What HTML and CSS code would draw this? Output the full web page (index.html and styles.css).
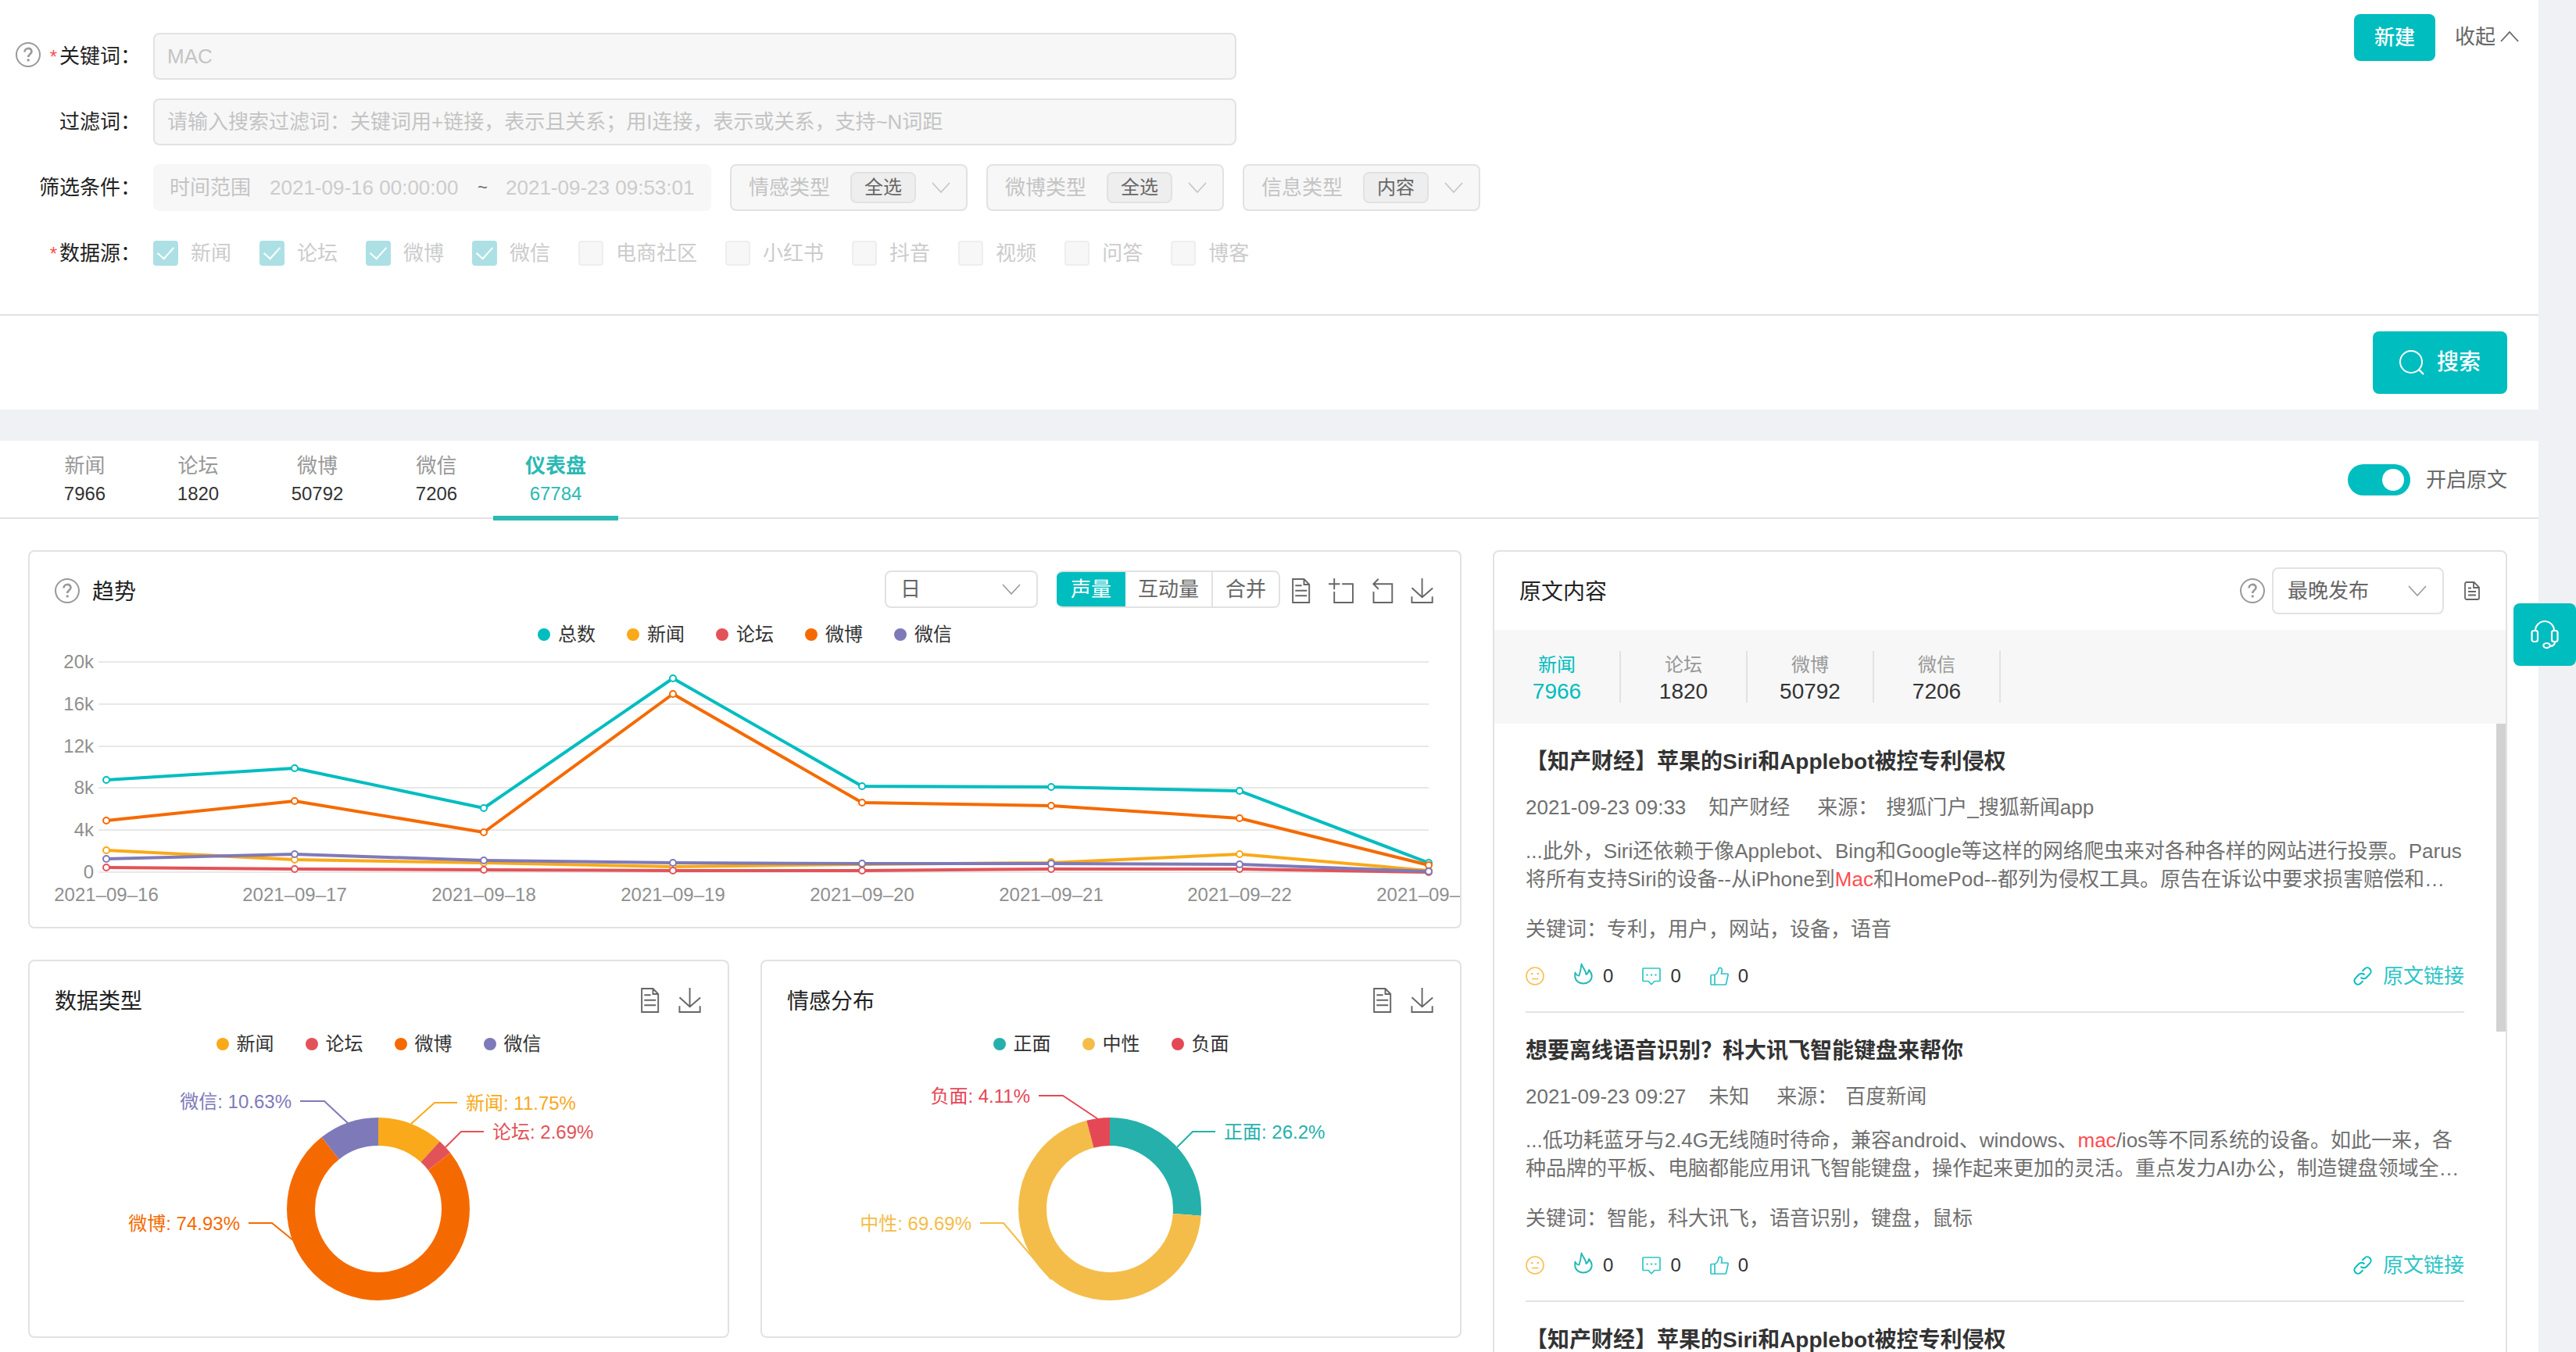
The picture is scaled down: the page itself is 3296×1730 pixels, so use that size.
FILE: index.html
```html
<!DOCTYPE html>
<html lang="zh-CN">
<head>
<meta charset="utf-8">
<meta name="viewport" content="width=device-width, initial-scale=1">
<title>舆情监测</title>
<link rel="stylesheet" href="styles.css">
</head>
<body>
<svg class="sprite" aria-hidden="true">
  <symbol id="i-help" viewBox="0 0 32 32"><circle cx="16" cy="16" r="15" stroke-width="2"/><path d="M11.5 12.5c0-6 9-6 9-.6 0 3.2-4.3 3.6-4.3 7" stroke-width="2.6"/><path d="M16.2 21.4v3" stroke-width="3"/></symbol>
  <symbol id="i-down" viewBox="0 0 24 14"><path d="M1 1l11 12L23 1" stroke-width="1.600"/></symbol>
  <symbol id="i-up" viewBox="0 0 24 14"><path d="M1 13L12 1l11 12" stroke-width="1.800"/></symbol>
  <symbol id="i-data" viewBox="0 0 60 60"><path d="M17.5 17.3H33M45.4 29.5h-28M11.5 2v56H51V14.8L38.4 2H11.5zM38.4 2.2v12.7H51M45.4 41.7h-28" stroke-width="3.6"/></symbol>
  <symbol id="i-zoom" viewBox="0 0 60 60"><path d="M0 13.5h26.9M13.5 26.9V0M32.1 13.5H58V58H13.5V32.1" stroke-width="3.6"/></symbol>
  <symbol id="i-back" viewBox="0 0 60 60"><path d="M22 1.4L9.9 13.5l12.3 12.3M10.3 13.5h44.6v44.6H10.3v-26" stroke-width="3.6"/></symbol>
  <symbol id="i-save" viewBox="0 0 60 60"><path d="M4.7 22.9l24.6 22.6 25.4-22.1M4.6 43.6V58h49.2V43.6M29.2 45.1V0" stroke-width="3.6"/></symbol>
  <symbol id="i-file" viewBox="0 0 20 24"><path d="M3 1h9.500l6.500 6.500V21a2 2 0 0 1-2 2H3a2 2 0 0 1-2-2V3a2 2 0 0 1 2-2zM12 1v7h7M5 8.500h4M5 13h10M5 17.500h10" stroke-width="1.800"/></symbol>
  <symbol id="i-face" viewBox="0 0 24 24"><circle cx="12" cy="12" r="11" stroke-width="1.600"/><path d="M7 9h2.500M14.500 9H17" stroke-width="2.200"/><path d="M8 15.500h8.500" stroke-width="1.600"/></symbol>
  <symbol id="i-fire" viewBox="-1 0 26 28"><path d="M1.500 12.500c1 2.500 2.500 4 5 4C8 12 9 6.500 9.500 1.500 11 6.500 15 9 15.500 15c1.800-1 3-3 3.500-6 2.300 2.500 3.700 5 3.700 8 0 5.500-4.500 9.500-10.700 9.500S1.200 22.500 1.200 17c0-1.500 0-3 .3-4.500z" stroke-width="1.900" stroke-linejoin="round"/></symbol>
  <symbol id="i-chat" viewBox="0 0 24 24"><path d="M2 2h20a1 1 0 0 1 1 1v14.500a1 1 0 0 1-1 1h-6L12 22.500l-4-4H2a1 1 0 0 1-1-1V3a1 1 0 0 1 1-1z" stroke-width="1.700"/><path d="M5.500 10.500h2.200M10.900 10.500h2.200M16.300 10.500h2.200" stroke-width="2.200"/></symbol>
  <symbol id="i-like" viewBox="0 0 24 24"><path d="M6 10.500c3-1.500 4.500-3.500 5-8 .3-1.700 4-1.700 4.300 1 .1 1.500-.3 3.500-.8 5.500H22c1 0 1.300.8 1.100 1.500l-2.400 11c-.2 1-.9 1.500-1.900 1.500H2a1 1 0 0 1-1-1V11.500a1 1 0 0 1 1-1h4zM6 10.500V23" stroke-width="1.700"/></symbol>
  <symbol id="i-link" viewBox="0 0 24 24"><path d="M9.500 13.600a5 5 0 0 0 7.200.4l4.500-4.600a4.700 4.700 0 0 0-6.600-6.700l-3.200 3.200M14.500 10.400a5 5 0 0 0-7.200-.4l-4.500 4.600a4.700 4.700 0 0 0 6.600 6.700l3.200-3.200" stroke-width="2"/></symbol>
  <symbol id="i-search" viewBox="0 0 32 32"><circle cx="15" cy="15" r="14" stroke-width="2"/><path d="M25 25l6 6" stroke-width="2.400"/></symbol>
  <symbol id="i-headset" viewBox="0 0 36 36"><path d="M6 13a12 12 0 0 1 24 0M31 27c0 4-3 6-7 6" stroke-width="2.200"/><rect x="1.500" y="13" width="7.500" height="14" rx="2.500" stroke-width="2.200"/><rect x="27" y="13" width="7.500" height="14" rx="2.500" stroke-width="2.200"/><ellipse cx="20.500" cy="32" rx="4.200" ry="3" stroke-width="2.200"/></symbol>
</svg>

<div class="shell">
  <section class="panel">
    <div class="query">
      <form class="form">
        <div class="row">
          <label class="row-label" for="kw"><svg class="ic-32 muted"><use href="#i-help"/></svg><span><i class="req">*</i>关键词：</span></label>
          <input class="field" id="kw" type="text" value="MAC" disabled>
        </div>
        <div class="row">
          <label class="row-label" for="flt"><span>过滤词：</span></label>
          <input class="field" id="flt" type="text" placeholder="请输入搜索过滤词：关键词用+链接，表示且关系；用I连接，表示或关系，支持~N词距" disabled>
        </div>
        <div class="row">
          <span class="row-label">筛选条件：</span>
          <div class="filters">
            <div class="range">
              <label for="from">时间范围</label>
              <input id="from" type="text" value="2021-09-16 00:00:00" disabled>
              <span class="tilde">~</span>
              <input aria-label="结束时间" type="text" value="2021-09-23 09:53:01" disabled>
            </div>
            <label class="pick">情感类型<select disabled><option>全选</option></select><svg class="chev"><use href="#i-down"/></svg></label>
            <label class="pick">微博类型<select disabled><option>全选</option></select><svg class="chev"><use href="#i-down"/></svg></label>
            <label class="pick">信息类型<select disabled><option>内容</option></select><svg class="chev"><use href="#i-down"/></svg></label>
          </div>
        </div>
        <div class="row">
          <span class="row-label"><span><i class="req">*</i>数据源：</span></span>
          <div class="sources">
            <label><input type="checkbox" checked disabled>新闻</label>
            <label><input type="checkbox" checked disabled>论坛</label>
            <label><input type="checkbox" checked disabled>微博</label>
            <label><input type="checkbox" checked disabled>微信</label>
            <label><input type="checkbox" disabled>电商社区</label>
            <label><input type="checkbox" disabled>小红书</label>
            <label><input type="checkbox" disabled>抖音</label>
            <label><input type="checkbox" disabled>视频</label>
            <label><input type="checkbox" disabled>问答</label>
            <label><input type="checkbox" disabled>博客</label>
          </div>
        </div>
      </form>
      <div class="query-actions">
        <button class="btn" type="button">新建</button>
        <button class="fold" type="button">收起<svg class="chev"><use href="#i-up"/></svg></button>
      </div>
    </div>
    <div class="submit">
      <button class="btn btn-search" type="button"><svg class="ic-32"><use href="#i-search"/></svg>搜索</button>
    </div>
  </section>

  <section class="panel results">
    <div class="tabbar">
      <nav class="tabs">
        <button class="tab" type="button"><span>新闻</span><b>7966</b></button>
        <button class="tab" type="button"><span>论坛</span><b>1820</b></button>
        <button class="tab tab-wide" type="button"><span>微博</span><b>50792</b></button>
        <button class="tab" type="button"><span>微信</span><b>7206</b></button>
        <button class="tab tab-wide active" type="button"><span>仪表盘</span><b>67784</b></button>
      </nav>
      <label class="toggle"><input type="checkbox" role="switch" checked>开启原文</label>
    </div>

    <div class="board">
      <div class="charts">
        <article class="card trend">
          <header class="card-head">
            <svg class="ic-32 muted"><use href="#i-help"/></svg>
            <h2>趋势</h2>
            <div class="tools">
              <label class="select day"><select aria-label="时间粒度"><option>日</option></select><svg class="chev"><use href="#i-down"/></svg></label>
              <div class="segments">
                <button type="button" class="on">声量</button><button type="button">互动量</button><button type="button">合并</button>
              </div>
              <div class="toolbox">
                <svg class="ic-32"><use href="#i-data"/></svg>
                <svg class="ic-32"><use href="#i-zoom"/></svg>
                <svg class="ic-32"><use href="#i-back"/></svg>
                <svg class="ic-32"><use href="#i-save"/></svg>
              </div>
            </div>
          </header>
          <ul class="legend">
            <li class="c-total">总数</li><li class="c-news">新闻</li><li class="c-forum">论坛</li><li class="c-weibo">微博</li><li class="c-wechat">微信</li>
          </ul>
          <svg class="chart" viewBox="38 826 1830 360">
            <path class="grid" d="M126 847H1828M126 901H1828M126 955H1828M126 1008H1828M126 1062H1828M126 1116H1828"/>
            <g class="axis axis-y">
              <text x="120" y="855">20k</text><text x="120" y="909">16k</text><text x="120" y="963">12k</text><text x="120" y="1016">8k</text><text x="120" y="1070">4k</text><text x="120" y="1124">0</text>
            </g>
            <g class="axis axis-x">
              <text x="136" y="1153">2021–09–16</text><text x="377" y="1153">2021–09–17</text><text x="619" y="1153">2021–09–18</text><text x="861" y="1153">2021–09–19</text><text x="1103" y="1153">2021–09–20</text><text x="1345" y="1153">2021–09–21</text><text x="1586" y="1153">2021–09–22</text><text x="1828" y="1153">2021–09–23</text>
            </g>
            <g class="line c-total"><polyline points="136,998 377,983 619,1034 861,868 1103,1006 1345,1007 1586,1012 1828,1104"/><circle cx="136" cy="998" r="4"/><circle cx="377" cy="983" r="4"/><circle cx="619" cy="1034" r="4"/><circle cx="861" cy="868" r="4"/><circle cx="1103" cy="1006" r="4"/><circle cx="1345" cy="1007" r="4"/><circle cx="1586" cy="1012" r="4"/><circle cx="1828" cy="1104" r="4"/></g>
            <g class="line c-news"><polyline points="136,1088 377,1100 619,1104 861,1109 1103,1106 1345,1104 1586,1093 1828,1114"/><circle cx="136" cy="1088" r="4"/><circle cx="377" cy="1100" r="4"/><circle cx="619" cy="1104" r="4"/><circle cx="861" cy="1109" r="4"/><circle cx="1103" cy="1106" r="4"/><circle cx="1345" cy="1103" r="4"/><circle cx="1586" cy="1093" r="4"/><circle cx="1828" cy="1114" r="4"/></g>
            <g class="line c-forum"><polyline points="136,1110 377,1112 619,1113 861,1114 1103,1114 1345,1112 1586,1112 1828,1116"/><circle cx="136" cy="1110" r="4"/><circle cx="377" cy="1112" r="4"/><circle cx="619" cy="1113" r="4"/><circle cx="861" cy="1114" r="4"/><circle cx="1103" cy="1114" r="4"/><circle cx="1345" cy="1112" r="4"/><circle cx="1586" cy="1112" r="4"/><circle cx="1828" cy="1116" r="4"/></g>
            <g class="line c-weibo"><polyline points="136,1050 377,1025 619,1065 861,888 1103,1027 1345,1031 1586,1047 1828,1107"/><circle cx="136" cy="1050" r="4"/><circle cx="377" cy="1025" r="4"/><circle cx="619" cy="1065" r="4"/><circle cx="861" cy="888" r="4"/><circle cx="1103" cy="1027" r="4"/><circle cx="1345" cy="1031" r="4"/><circle cx="1586" cy="1047" r="4"/><circle cx="1828" cy="1107" r="4"/></g>
            <g class="line c-wechat"><polyline points="136,1099 377,1093 619,1101 861,1104 1103,1105 1345,1105 1586,1106 1828,1115"/><circle cx="136" cy="1099" r="4"/><circle cx="377" cy="1093" r="4"/><circle cx="619" cy="1101" r="4"/><circle cx="861" cy="1104" r="4"/><circle cx="1103" cy="1105" r="4"/><circle cx="1345" cy="1105" r="4"/><circle cx="1586" cy="1106" r="4"/><circle cx="1828" cy="1115" r="4"/></g>
          </svg>
        </article>

        <article class="card">
          <header class="card-head">
            <h2>数据类型</h2>
            <div class="tools"><div class="toolbox"><svg class="ic-32"><use href="#i-data"/></svg><svg class="ic-32"><use href="#i-save"/></svg></div></div>
          </header>
          <ul class="legend">
            <li class="c-news">新闻</li><li class="c-forum">论坛</li><li class="c-weibo">微博</li><li class="c-wechat">微信</li>
          </ul>
          <svg class="chart" viewBox="38 1349 893 360">
            <g class="ring" transform="rotate(-90 484 1546)">
              <circle class="c-news" cx="484" cy="1546" r="99" pathLength="10000" stroke-dasharray="1175 8825"/>
              <circle class="c-forum" cx="484" cy="1546" r="99" pathLength="10000" stroke-dasharray="269 9731" stroke-dashoffset="-1175"/>
              <circle class="c-weibo" cx="484" cy="1546" r="99" pathLength="10000" stroke-dasharray="7493 2507" stroke-dashoffset="-1444"/>
              <circle class="c-wechat" cx="484" cy="1546" r="99" pathLength="10000" stroke-dasharray="1063 8937" stroke-dashoffset="-8937"/>
            </g>
            <g class="c-news note"><path d="M526 1437l30-27h29"/><text x="596" y="1419">新闻: 11.75%</text></g>
            <g class="c-forum note"><path d="M570 1467l20-20h29"/><text x="630" y="1456">论坛: 2.69%</text></g>
            <g class="c-weibo note end"><path d="M318 1564h30l27 22"/><text x="307" y="1573">微博: 74.93%</text></g>
            <g class="c-wechat note end"><path d="M384 1408h31l31 29"/><text x="373" y="1417">微信: 10.63%</text></g>
          </svg>
        </article>

        <article class="card">
          <header class="card-head">
            <h2>情感分布</h2>
            <div class="tools"><div class="toolbox"><svg class="ic-32"><use href="#i-data"/></svg><svg class="ic-32"><use href="#i-save"/></svg></div></div>
          </header>
          <ul class="legend">
            <li class="c-pos">正面</li><li class="c-neu">中性</li><li class="c-neg">负面</li>
          </ul>
          <svg class="chart" viewBox="975 1349 893 360">
            <g class="ring" transform="rotate(-90 1420 1546)">
              <circle class="c-pos" cx="1420" cy="1546" r="99" pathLength="10000" stroke-dasharray="2620 7380"/>
              <circle class="c-neu" cx="1420" cy="1546" r="99" pathLength="10000" stroke-dasharray="6969 3031" stroke-dashoffset="-2620"/>
              <circle class="c-neg" cx="1420" cy="1546" r="99" pathLength="10000" stroke-dasharray="411 9589" stroke-dashoffset="-9589"/>
            </g>
            <g class="c-pos note"><path d="M1506 1467l20-20h29"/><text x="1566" y="1456">正面: 26.2%</text></g>
            <g class="c-neu note end"><path d="M1254 1564h30l61 72"/><text x="1243" y="1573">中性: 69.69%</text></g>
            <g class="c-neg note end"><path d="M1329 1401h31l45 30"/><text x="1318" y="1410">负面: 4.11%</text></g>
          </svg>
        </article>
      </div>

      <aside class="card origin">
        <header class="origin-head">
          <h2>原文内容</h2>
          <div class="tools">
            <svg class="ic-32 muted"><use href="#i-help"/></svg>
            <label class="select order"><select aria-label="排序"><option>最晚发布</option></select><svg class="chev"><use href="#i-down"/></svg></label>
            <svg class="ic-file"><use href="#i-file"/></svg>
          </div>
        </header>
        <nav class="kinds">
          <button type="button" class="on"><span>新闻</span><b>7966</b></button>
          <button type="button"><span>论坛</span><b>1820</b></button>
          <button type="button"><span>微博</span><b>50792</b></button>
          <button type="button"><span>微信</span><b>7206</b></button>
        </nav>
        <div class="list">
          <div class="thumb"></div>
          <section class="item">
            <h3>【知产财经】苹果的Siri和Applebot被控专利侵权</h3>
            <p class="meta"><span>2021-09-23 09:33</span><span>知产财经</span><span class="from">来源：</span><span>搜狐门户_搜狐新闻app</span></p>
            <p class="text">...此外，Siri还依赖于像Applebot、Bing和Google等这样的网络爬虫来对各种各样的网站进行投票。Parus将所有支持Siri的设备--从iPhone到<em>Mac</em>和HomePod--都列为侵权工具。原告在诉讼中要求损害赔偿和…</p>
            <p class="words">关键词：专利，用户，网站，设备，语音</p>
            <div class="stats">
              <svg class="ic-24 face"><use href="#i-face"/></svg>
              <span><svg class="ic-fire"><use href="#i-fire"/></svg>0</span>
              <span><svg class="ic-24"><use href="#i-chat"/></svg>0</span>
              <span><svg class="ic-24"><use href="#i-like"/></svg>0</span>
              <a href="#"><svg class="ic-24"><use href="#i-link"/></svg>原文链接</a>
            </div>
          </section>
          <section class="item">
            <h3>想要离线语音识别？科大讯飞智能键盘来帮你</h3>
            <p class="meta"><span>2021-09-23 09:27</span><span>未知</span><span class="from">来源：</span><span>百度新闻</span></p>
            <p class="text">...低功耗蓝牙与2.4G无线随时待命，兼容android、windows、<em>mac</em>/ios等不同系统的设备。如此一来，各种品牌的平板、电脑都能应用讯飞智能键盘，操作起来更加的灵活。重点发力AI办公，制造键盘领域全…</p>
            <p class="words">关键词：智能，科大讯飞，语音识别，键盘，鼠标</p>
            <div class="stats">
              <svg class="ic-24 face"><use href="#i-face"/></svg>
              <span><svg class="ic-fire"><use href="#i-fire"/></svg>0</span>
              <span><svg class="ic-24"><use href="#i-chat"/></svg>0</span>
              <span><svg class="ic-24"><use href="#i-like"/></svg>0</span>
              <a href="#"><svg class="ic-24"><use href="#i-link"/></svg>原文链接</a>
            </div>
          </section>
          <section class="item">
            <h3>【知产财经】苹果的Siri和Applebot被控专利侵权</h3>
          </section>
        </div>
      </aside>
    </div>
  </section>
  <button class="service" type="button" aria-label="在线客服"><svg><use href="#i-headset"/></svg></button>
</div>
</body>
</html>
```
FILE: styles.css
```css
:root {
  --brand: #00bdbf;
  --line: #e2e2e2;
  --soft: #f7f7f7;
  --text: #333;
  --sub: #666;
  --off: #c4c4c4;
}

* { box-sizing: border-box; margin: 0; padding: 0; }

body {
  font: 26px/36px "Liberation Sans", "Noto Sans CJK SC", sans-serif;
  color: var(--text);
  background: #f0f1f4;
}

button, input, select { font: inherit; color: inherit; border: 0; background: none; outline: 0; }
button { cursor: pointer; }
select { appearance: none; opacity: 1; }
svg { flex: none; fill: none; stroke: currentColor; display: block; }
ul { list-style: none; }
h2 { padding-top: 4px; font-size: 28px; font-weight: 400; color: #222; }
i, em { font-style: normal; }
b { font-weight: 400; }

.sprite { position: absolute; width: 0; height: 0; }
.ic-32 { width: 32px; height: 32px; }
.ic-24 { width: 24px; height: 24px; }
.ic-fire { width: 26px; height: 28px; }
.ic-file { width: 20px; height: 24px; color: var(--sub); }
.chev { width: 24px; height: 14px; }
.muted { color: #999; }

.shell {
  position: relative;
  display: flex;
  flex-direction: column;
  gap: 40px;
  height: 100vh;
  padding-right: 48px;
  overflow: hidden;
}
.panel { background: #fff; }

/* search form */
.query {
  display: flex;
  justify-content: space-between;
  border-bottom: 2px solid var(--line);
}
.form {
  flex: 1;
  display: flex;
  flex-direction: column;
  gap: 24px;
  padding: 42px 0 48px;
}
.row { display: flex; align-items: center; height: 60px; }
.row-label {
  flex: none;
  display: flex;
  align-items: center;
  justify-content: flex-end;
  gap: 12px;
  width: 196px;
  padding-right: 16px;
  color: #222;
}
.row-label .ic-32 { margin-bottom: 4px; }
.req { margin-right: 3px; color: #ff4d4f; font-size: 24px; }
.field {
  width: 1386px;
  max-width: 100%;
  height: 60px;
  padding: 0 16px;
  border: 2px solid var(--line);
  border-radius: 8px;
  background: var(--soft);
  color: var(--off);
}
.field::placeholder { color: var(--off); opacity: 1; }
.filters { display: flex; gap: 24px; color: var(--off); }
.range {
  display: flex;
  align-items: center;
  gap: 24px;
  height: 60px;
  padding: 0 21px;
  border-radius: 8px;
  background: var(--soft);
}
.range input { width: 242px; color: #ccc; }
.tilde { width: 12px; color: var(--sub); font-size: 22px; }
.pick {
  display: flex;
  align-items: center;
  width: 304px;
  height: 60px;
  padding: 0 20px 0 22px;
  border: 2px solid var(--line);
  border-radius: 8px;
  background: var(--soft);
  white-space: nowrap;
}
.pick select {
  width: 84px;
  height: 40px;
  margin: 0 20px 0 26px;
  border: 2px solid var(--line);
  border-radius: 8px;
  background: #eee;
  color: var(--sub);
  font-size: 24px;
  text-align-last: center;
}
.sources { display: flex; gap: 36px; color: #ccc; }
.sources label { display: flex; align-items: center; gap: 16px; }
.sources input {
  appearance: none;
  display: grid;
  place-items: center;
  width: 32px;
  height: 32px;
  border: 2px solid #eee;
  border-radius: 4px;
  background: var(--soft);
}
.sources input:checked { border-color: #ace0e4; background: #ace0e4; }
.sources input:checked::before {
  content: "";
  width: 10px;
  height: 18px;
  margin-bottom: 6px;
  border: solid #fff;
  border-width: 0 2px 2px 0;
  transform: rotate(42deg);
}
.query-actions { display: flex; align-items: flex-start; gap: 25px; padding: 18px 25px 0 0; }
.btn {
  display: flex;
  align-items: center;
  justify-content: center;
  width: 104px;
  height: 60px;
  border-radius: 8px;
  background: var(--brand);
  color: #fff;
  font-weight: 500;
}
.btn-search { gap: 16px; width: 172px; height: 80px; font-size: 28px; }
.fold { display: flex; align-items: center; gap: 6px; height: 58px; color: var(--sub); }
.submit { display: flex; justify-content: flex-end; padding: 20px 40px; }

/* result tabs */
.results { flex: 1; }
.tabbar {
  display: flex;
  justify-content: space-between;
  height: 100px;
  padding: 0 40px 0 36px;
  border-bottom: 2px solid var(--line);
}
.tabs { display: flex; height: 102px; }
.tab {
  display: flex;
  flex-direction: column;
  align-items: center;
  width: 145px;
  padding-top: 14px;
  border-bottom: 6px solid transparent;
}
.tab-wide { width: 160px; }
.tab span { color: #999; }
.tab b { font-size: 24px; }
.tab.active { border-color: #2bb9b4; }
.tab.active span { color: #2bb9b4; font-weight: 700; }
.tab.active b { color: #2bb9b4; }
.toggle { display: flex; align-items: center; gap: 20px; padding-top: 2px; color: var(--sub); }
.toggle input {
  appearance: none;
  display: flex;
  align-items: center;
  justify-content: flex-end;
  width: 80px;
  height: 40px;
  padding-right: 8px;
  border-radius: 20px;
  background: var(--brand);
}
.toggle input::before { content: ""; width: 28px; height: 28px; border-radius: 50%; background: #fff; }

/* dashboard */
.board {
  display: grid;
  grid-template-columns: 1413fr 1000fr;
  gap: 40px;
  padding: 40px 40px 0 36px;
}
.charts { display: grid; grid-template-columns: 1fr 1fr; gap: 40px; align-content: start; }
.card { min-width: 0; border: 2px solid var(--line); border-radius: 8px; background: #fff; overflow: hidden; }
.trend { grid-column: 1 / -1; }
.card-head { display: flex; align-items: center; gap: 16px; height: 92px; padding: 8px 32px 0; }
.tools { display: flex; align-items: center; margin-left: auto; color: var(--sub); }
.toolbox { display: flex; gap: 20px; margin-left: 10px; }
.select { position: relative; display: flex; align-items: center; }
.select select {
  width: 100%;
  height: 100%;
  padding: 0 18px;
  border: 2px solid var(--line);
  border-radius: 8px;
}
.select .chev { position: absolute; right: 22px; color: #999; pointer-events: none; }
.day { width: 196px; height: 48px; margin: 0 24px 4px 0; }
.order { width: 220px; height: 60px; margin: 0 26px 0 9px; }
.segments { display: flex; height: 48px; margin-bottom: 4px; border: 2px solid var(--line); border-left: 0; border-radius: 8px; overflow: hidden; }
.segments button { padding: 0 16px; border-left: 2px solid var(--line); }
.segments .on { margin: -2px 0; border: 0; padding: 0 18px; background: var(--brand); color: #fff; }
.segments .on + button { border-left: 0; }
.legend { display: flex; justify-content: center; gap: 40px; font-size: 24px; line-height: 28px; }
.legend li { display: flex; align-items: center; gap: 10px; color: var(--text); }
.legend li::before { content: ""; width: 16px; height: 16px; border-radius: 50%; background: var(--c); }
.chart { width: 100%; height: auto; font-size: 24px; }
.chart text { stroke: none; }
.grid { stroke: #e8e8e8; stroke-width: 2; }
.axis { fill: #8f8f8f; }
.axis-y { text-anchor: end; }
.axis-x { text-anchor: middle; }
.line { stroke: var(--c); }
.line polyline { stroke-width: 4; stroke-linejoin: round; }
.line circle { fill: #fff; stroke-width: 2; }
.ring circle { stroke: var(--c); stroke-width: 36; }
.note path { stroke: var(--c); stroke-width: 2; }
.note text { fill: var(--c); }
.end { text-anchor: end; }

.c-total { --c: #00bdbf; }
.c-news { --c: #f9a919; }
.c-forum { --c: #e25359; }
.c-weibo { --c: #f56a00; }
.c-wechat { --c: #7e7ab9; }
.c-pos { --c: #26b0ac; }
.c-neu { --c: #f4bd4a; }
.c-neg { --c: #e54855; }

/* source articles */
.origin-head { display: flex; align-items: center; height: 100px; padding: 0 33px 0 32px; }
.kinds { display: flex; align-items: center; height: 120px; background: var(--soft); }
.kinds button {
  display: flex;
  flex-direction: column;
  align-items: center;
  width: 162px;
  height: 66px;
  padding-top: 1px;
  border-right: 2px solid var(--line);
  line-height: 34px;
}
.kinds span { font-size: 24px; color: #999; }
.kinds b { font-size: 28px; }
.kinds .on span, .kinds .on b { color: var(--brand); }
.list { position: relative; padding: 0 53px 0 40px; }
.thumb { position: absolute; top: 0; right: 0; width: 12px; height: 394px; background: #d2d2d2; }
.item { height: 370px; padding-top: 29px; border-bottom: 2px solid var(--line); color: #707070; }
.item h3 { margin-bottom: 20px; font-size: 28px; line-height: 40px; color: var(--text); }
.meta { display: flex; gap: 29px; margin-bottom: 20px; }
.meta .from { margin: 0 -19px 0 6px; }
.text { margin-bottom: 28px; }
.text em { color: #ff4d4f; }
.words { margin-bottom: 24px; }
.stats { display: flex; align-items: center; gap: 37px; font-size: 24px; color: var(--text); }
.stats span { display: flex; align-items: center; gap: 12px; }
.stats svg { color: #2cc5c7; }
.stats .face { color: #fdbd4d; }
.stats .ic-fire { margin-bottom: 6px; color: #26b8b6; }
.stats a {
  display: flex;
  align-items: center;
  gap: 14px;
  margin-left: auto;
  color: #2cc5c7;
  font-size: 26px;
  text-decoration: none;
}
.stats a svg { color: var(--brand); }

.service {
  position: absolute;
  top: 772px;
  right: 0;
  display: grid;
  place-items: center;
  width: 80px;
  height: 80px;
  border-radius: 8px;
  background: var(--brand);
  color: #fff;
}
.service svg { width: 36px; height: 36px; }
```
